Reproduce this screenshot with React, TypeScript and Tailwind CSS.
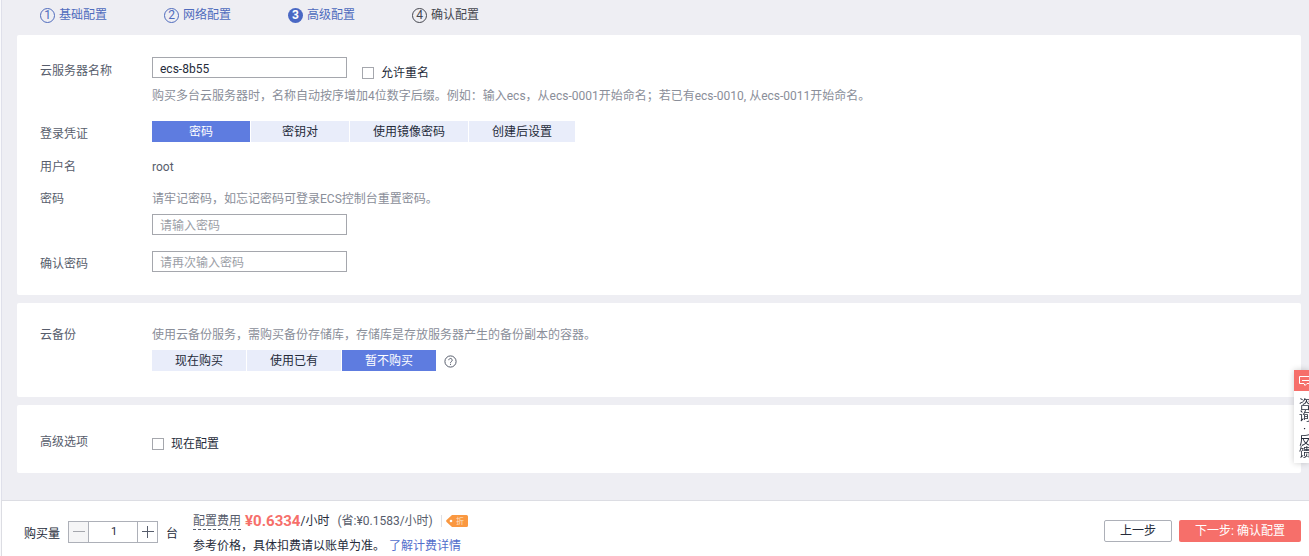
import { useState, type ReactNode } from "react";

type Option = { value: string; label: string };

const steps = [
  { n: 1, label: "基础配置", state: "done" },
  { n: 2, label: "网络配置", state: "done" },
  { n: 3, label: "高级配置", state: "current" },
  { n: 4, label: "确认配置", state: "todo" },
];

const loginOptions: Option[] = [
  { value: "password", label: "密码" },
  { value: "keypair", label: "密钥对" },
  { value: "image", label: "使用镜像密码" },
  { value: "later", label: "创建后设置" },
];

const backupOptions: Option[] = [
  { value: "now", label: "现在购买" },
  { value: "existing", label: "使用已有" },
  { value: "none", label: "暂不购买" },
];

function Steps() {
  return (
    <ol className="flex gap-[57px] px-10 pt-[5px] pb-2.5">
      {steps.map((s) => (
        <li
          key={s.n}
          className={
            s.state === "todo"
              ? "flex items-center gap-1 text-[#45474f]"
              : "flex items-center gap-1 text-[#4f6bbd]"
          }
        >
          <span
            className={
              s.state === "current"
                ? "flex size-[15px] items-center justify-center rounded-full bg-[#4a68c4] text-xs font-bold leading-none text-white"
                : "flex size-[15px] items-center justify-center rounded-full border border-current text-xs leading-none"
            }
          >
            {s.n}
          </span>
          {s.label}
        </li>
      ))}
    </ol>
  );
}

function Segmented({
  options,
  value,
  onChange,
  label,
  wide = false,
}: {
  options: Option[];
  value: string;
  onChange: (v: string) => void;
  label: string;
  wide?: boolean;
}) {
  return (
    <div role="group" aria-label={label} className="flex gap-px">
      {options.map((o) => (
        <button
          key={o.value}
          type="button"
          aria-pressed={o.value === value}
          onClick={() => onChange(o.value)}
          className={[
            "h-[21px] px-[23px]",
            wide ? "min-w-[98px]" : "",
            o.value === value ? "bg-[#5e7ce0] text-white" : "bg-[#e9edfa] text-[#252b3a]",
          ].join(" ")}
        >
          {o.label}
        </button>
      ))}
    </div>
  );
}

function Row({
  label,
  htmlFor,
  className = "",
  labelClass = "",
  children,
}: {
  label: string;
  htmlFor?: string;
  className?: string;
  labelClass?: string;
  children: ReactNode;
}) {
  return (
    <div className={`grid grid-cols-[112px_1fr] items-start ${className}`}>
      {htmlFor ? (
        <label htmlFor={htmlFor} className={`text-[#575d6c] ${labelClass}`}>
          {label}
        </label>
      ) : (
        <span className={`text-[#575d6c] ${labelClass}`}>{label}</span>
      )}
      <div>{children}</div>
    </div>
  );
}

const fieldClass =
  "block h-[21px] w-[195px] border border-[#a5a7ad] bg-white px-[7px] pt-0.5 text-[#252b3a] outline-none placeholder:text-[#9b9ea6] focus:border-[#5e7ce0]";
const boxClass = "size-3 appearance-none border border-[#a5a7ad] bg-white checked:bg-[#5e7ce0]";

export default function App() {
  const [name, setName] = useState("ecs-8b55");
  const [login, setLogin] = useState("password");
  const [backup, setBackup] = useState("none");
  const [count, setCount] = useState(1);

  return (
    <div className="flex min-h-screen flex-col overflow-x-hidden border-l border-[#fafafc] bg-[#eeeef3] font-[Roboto,'Noto_Sans_CJK_SC',sans-serif] text-xs leading-5 text-[#252b3a]">
      <main className="flex-1 border-l border-[#dfe0ea] pb-[27px]">
        <div className="-ml-0.5">
          <Steps />
        </div>
        <div className="mr-2 ml-[15px] flex flex-col gap-2">
          <section className="rounded-xs bg-white px-[23px] pt-[22px] pb-[21px]">
            <Row label="云服务器名称" htmlFor="name" labelClass="pt-1">
              <div className="flex">
                <input
                  id="name"
                  value={name}
                  onChange={(e) => setName(e.target.value)}
                  className={fieldClass}
                />
                <label className="-mb-1 flex items-center gap-[7px] pt-1.5 pl-[15px] leading-4">
                  <input type="checkbox" className={boxClass} />
                  允许重名
                </label>
              </div>
              <p className="mt-2 text-[#8a8e99]">
                购买多台云服务器时，名称自动按序增加4位数字后缀。例如：输入ecs，从ecs-0001开始命名；若已有ecs-0010, 从ecs-0011开始命名。
              </p>
            </Row>
            <Row label="登录凭证" className="mt-[15px]" labelClass="pt-[3px]">
              <Segmented
                label="登录凭证"
                options={loginOptions}
                value={login}
                onChange={setLogin}
                wide
              />
            </Row>
            <Row label="用户名" className="mt-[13px]">
              <span className="text-[#575d6c]">root</span>
            </Row>
            <Row label="密码" htmlFor="password" className="mt-3">
              <p className="text-[#8a8e99]">请牢记密码，如忘记密码可登录ECS控制台重置密码。</p>
              <input
                id="password"
                type="password"
                placeholder="请输入密码"
                className={`mt-[5px] ${fieldClass}`}
              />
            </Row>
            <Row label="确认密码" htmlFor="confirm" className="mt-4" labelClass="pt-[3px]">
              <input
                id="confirm"
                type="password"
                placeholder="请再次输入密码"
                className={fieldClass}
              />
            </Row>
          </section>

          <section className="rounded-xs bg-white px-[23px] pt-[22px] pb-[26px]">
            <Row label="云备份">
              <p className="text-[#8a8e99]">
                使用云备份服务，需购买备份存储库，存储库是存放服务器产生的备份副本的容器。
              </p>
              <div className="mt-[5px] flex items-center gap-2">
                <Segmented
                  label="云备份"
                  options={backupOptions}
                  value={backup}
                  onChange={setBackup}
                />
                <button type="button" aria-label="帮助" className="pt-0.5 text-[#575d6c]">
                  <svg viewBox="0 0 13 13" className="size-[13px]" fill="none" stroke="currentColor">
                    <circle cx="6.5" cy="6.5" r="5.6" />
                    <path d="M4.8 5.2a1.7 1.7 0 1 1 2.6 1.4c-.6.4-.9.7-.9 1.3M6.5 8.8v1.1" />
                  </svg>
                </button>
              </div>
            </Row>
          </section>

          <section className="rounded-xs bg-white px-[23px] pt-[27px] pb-[19px]">
            <Row label="高级选项">
              <label className="flex items-center gap-[7px] pt-0.5">
                <input type="checkbox" className={boxClass} />
                现在配置
              </label>
            </Row>
          </section>
        </div>
      </main>

      <footer className="flex items-center justify-between border-t border-l border-[#dcdde3] bg-white pr-2 pl-[22px]">
        <div className="flex">
          <div className="flex items-center gap-2 pt-1.5">
            <label htmlFor="count" className="pt-1">购买量</label>
            <div className="flex h-[22px] w-[90px] border border-[#adb0b8]">
              <button
                type="button"
                aria-label="减少"
                onClick={() => setCount(Math.max(1, count - 1))}
                className="flex w-5 items-center justify-center border-r border-[#adb0b8] bg-[#f5f5f6] text-[#a5a7ad]"
              >
                <svg viewBox="0 0 12 12" className="size-3" stroke="currentColor">
                  <path d="M0 5.5h12" />
                </svg>
              </button>
              <input
                id="count"
                value={count}
                onChange={(e) => setCount(Number(e.target.value) || 1)}
                className="min-w-0 flex-1 pl-0.5 text-center text-[11px] outline-none"
              />
              <button
                type="button"
                aria-label="增加"
                onClick={() => setCount(count + 1)}
                className="flex w-5 items-center justify-center border-l border-[#adb0b8] text-[#575d6c]"
              >
                <svg viewBox="0 0 12 12" className="size-3" stroke="currentColor">
                  <path d="M0 5.5h12M5.5 0v12" />
                </svg>
              </button>
            </div>
            <span className="pt-1">台</span>
          </div>
          <div className="ml-[15px] pt-[9px]">
            <div className="flex h-[22px] items-center">
              <span className="border-b border-dashed border-[#575d6c] leading-4 text-[#575d6c]">
                配置费用
              </span>
              <strong className="ml-1 text-[15px] font-bold leading-5 text-[#f66f6a]">¥0.6334</strong>
              <span>/小时</span>
              <span className="ml-2 text-[#575d6c]">(省:¥0.1583/小时)</span>
              <span className="ml-2 h-3 w-px bg-[#dfe1e6]" />
              <svg viewBox="0 0 22 12" className="ml-1 h-3 w-[22px]">
                <path
                  d="M6 0h14.5A1.5 1.5 0 0 1 22 1.5v9a1.5 1.5 0 0 1-1.5 1.5H6L.8 7.2a1.6 1.6 0 0 1 0-2.4z"
                  fill="#fa9841"
                />
                <circle cx="5" cy="6" r="1.3" fill="#fff" />
                <text x="10" y="9" fontSize="8" fill="#fde0c2">
                  折
                </text>
              </svg>
            </div>
            <p className="flex h-6 items-center gap-1 pt-1">
              参考价格，具体扣费请以账单为准。
              <a href="#pricing" className="text-[#526ecc]">
                了解计费详情
              </a>
            </p>
          </div>
        </div>
        <div className="flex gap-[7px] pt-1">
          <button
            type="button"
            className="h-[22px] w-[68px] rounded-xs border border-[#adb0b8] bg-white"
          >
            上一步
          </button>
          <button
            type="button"
            className="h-[22px] w-[122px] rounded-xs bg-[#f66f6a] text-white"
          >
            下一步: 确认配置
          </button>
        </div>
      </footer>

      <aside className="fixed top-[370px] right-0 w-[15px] overflow-hidden bg-white shadow-[0_0_6px_rgba(0,0,0,0.2)]">
        <button type="button" className="block w-6 text-left">
          <span className="flex h-[21px] items-center bg-[#f66f6a] pl-[5px] text-white">
            <svg viewBox="0 0 14 12" className="h-3 w-3.5 shrink-0" fill="none" stroke="currentColor">
              <path d="M.5 1.5h13v7H8l-2 2-1-2H.5zM3 5.5h8" />
            </svg>
          </span>
          <span className="flex flex-col pt-2 pb-1 pl-[5px] leading-3">
            <span>咨</span>
            <span>询</span>
            <span className="pl-1">·</span>
            <span>反</span>
            <span>馈</span>
          </span>
        </button>
      </aside>
    </div>
  );
}
